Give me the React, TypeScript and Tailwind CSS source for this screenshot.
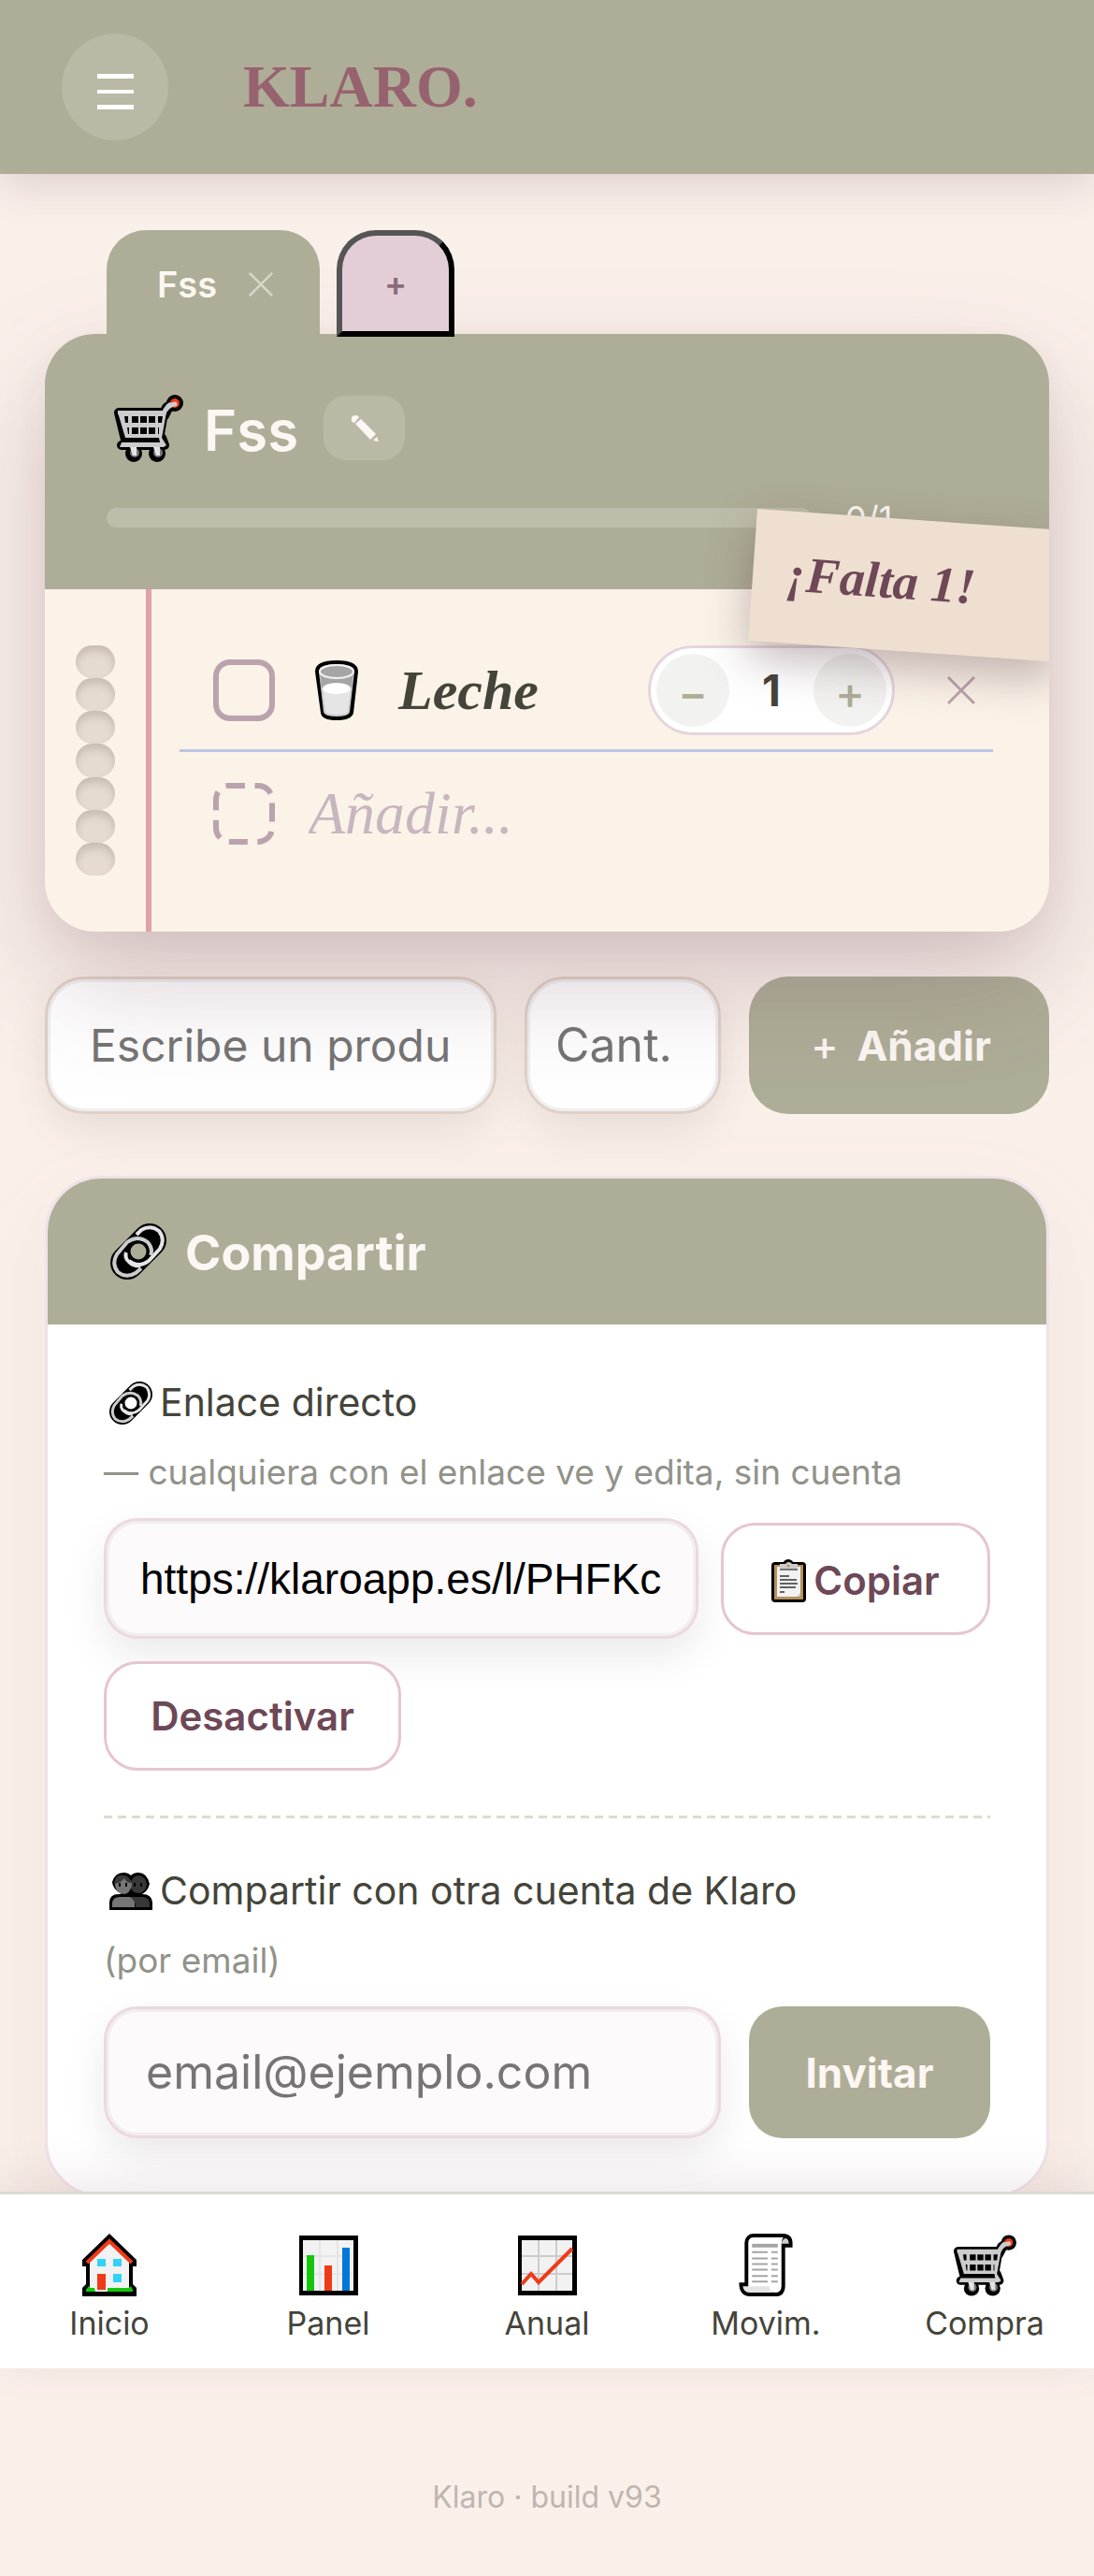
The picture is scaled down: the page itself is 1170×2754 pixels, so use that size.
import React, { useState } from 'react';

type IconProps = { className?: string };

const CartIcon: React.FC<IconProps> = ({ className }) => (
  <svg viewBox="0 0 74 72" className={className} aria-hidden="true">
    <g stroke="#000" strokeLinejoin="round" strokeLinecap="round" fill="#000">
      <path d="M5 19H53L48 48H12Z" strokeWidth="10" />
      <path d="M53 22L57 14L65 9" fill="none" strokeWidth="12" />
      <circle cx="65" cy="9" r="9" stroke="none" />
      <path d="M8 54H54L51 46" strokeWidth="10" />
      <circle cx="21" cy="63" r="9" stroke="none" />
      <circle cx="46" cy="63" r="9" stroke="none" />
    </g>
    <path d="M4 19H53L56 14Q59 9 65 9" fill="none" stroke="#ccc" strokeWidth="4" />
    <circle cx="65" cy="9" r="5" fill="#f03a17" />
    <path d="M53 20Q57 11 65 10" fill="none" stroke="#ccc" strokeWidth="5" strokeLinecap="round" />
    <path d="M4 19H56L51 46H12Z" fill="#ccc" />
    <path d="M11 23H15V30H12ZM19 23H26V30H19ZM28 23H35V30H28ZM37 23H44V30H37ZM47 23H52L51 30H47ZM14 35H16V42H15ZM19 35H26V42H19ZM28 35H35V42H28ZM37 35H44V42H37ZM47 35H48V42H47Z" fill="#000" />
    <path d="M12 46H50V50H12Z" fill="#000" />
    <path d="M48 46H51L56 54L53 56H6L8 51H49Z" fill="#ccc" />
    <circle cx="22" cy="62" r="5" fill="#767676" />
    <circle cx="47" cy="62" r="5" fill="#767676" />
    <path d="M17 56H24V65H20ZM42 56H49V65H45Z" fill="#e5e5e5" />
  </svg>
);

const LinkIcon: React.FC<IconProps & { hole: string }> = ({ className, hole }) => (
  <svg viewBox="0 0 60 60" className={className} aria-hidden="true">
    <path d="M18 42L42 18" stroke="#000" strokeWidth="36" strokeLinecap="round" />
    <path d="M28 12L33 7Q43 1 52 8Q59 17 53 27L41 40Q31 48 20 40" fill="none" stroke="#e5e5e5" strokeWidth="4" />
    <path d="M33 48L27 53Q17 59 8 52Q1 43 7 33L18 20Q29 12 40 20Q46 27 43 34" fill="none" stroke="#ccc" strokeWidth="4" />
    <path d="M17 31Q15 37 20 41Q25 46 32 45" fill="none" stroke="#e5e5e5" strokeWidth="4" />
    <circle cx="30" cy="30" r="10" fill={hole} stroke="#000" strokeWidth="3" />
  </svg>
);

const MilkIcon: React.FC<IconProps> = ({ className }) => (
  <svg viewBox="0 0 46 64" className={className} aria-hidden="true">
    <path d="M0 12Q0 0 23 0T46 12L41 56Q39 64 23 64T6 56Z" fill="#000" />
    <path d="M4 12Q4 4 23 4T42 12L37 55Q36 60 23 60T9 55Z" fill="#ccc" />
    <path d="M5 12L7 30H39L41 12Z" fill="#a5a5a5" />
    <ellipse cx="23" cy="12" rx="18" ry="7" fill="#a5a5a5" stroke="#f2f2f2" strokeWidth="2" />
    <path d="M8 30H38L35 55Q33 58 23 58T11 55Z" fill="#e5e5e5" />
    <ellipse cx="23" cy="30" rx="15" ry="6" fill="#fff" />
  </svg>
);

const ClipboardIcon: React.FC<IconProps> = ({ className }) => (
  <svg viewBox="0 0 37 46" className={className} aria-hidden="true">
    <rect y="3" width="37" height="43" rx="4" fill="#000" />
    <circle cx="18" cy="6" r="6" fill="#000" />
    <rect x="3" y="6" width="31" height="37" fill="#b98f5e" />
    <path d="M6 8H31V37L28 40H6Z" fill="#f2f2f2" />
    <path d="M31 36V40H27Z" fill="#ccc" />
    <path d="M9 10V5H15A4 4 0 0 1 22 5H28V10Z" fill="#ccc" />
    <circle cx="18" cy="7" r="1.5" fill="#b98f5e" />
    <path d="M9 11H28" stroke="#767676" strokeWidth="2" />
    <path d="M9 18H19M9 22H27M9 26H28M9 30H26M9 35H14" stroke="#333" strokeWidth="1.5" />
  </svg>
);

const PeopleIcon: React.FC<IconProps> = ({ className }) => (
  <svg viewBox="0 0 46 40" className={className} aria-hidden="true">
    <path d="M0 40V32Q0 23 10 23H13Q3 17 3 10Q6 0 15 0Q20 0 23 3Q26 0 31 0Q40 0 43 12Q41 20 35 23Q46 23 46 33V40Z" fill="#000" />
    <path d="M22 14Q24 3 31 3Q39 4 40 13Q38 22 31 22Q24 22 22 14Z" fill="#383838" />
    <path d="M6 13Q6 3 14 3Q22 3 24 13Q22 23 15 23Q7 22 6 13Z" fill="#767676" />
    <path d="M5 12Q6 2 14 3Q22 3 23 11Q18 11 16 6Q12 11 5 12Z" fill="#383838" />
    <path d="M3 37V32Q4 26 11 26H27V37Z" fill="#767676" />
    <path d="M22 26H36Q43 27 43 33V37H28Q28 29 22 26Z" fill="#383838" />
    <path d="M11 11V15M18 11V15M27 11V15M34 11V15" stroke="#000" strokeWidth="2" />
  </svg>
);

const HouseIcon: React.FC<IconProps> = ({ className }) => (
  <svg viewBox="0 0 58 67" className={className} aria-hidden="true">
    <path d="M0 28L29 0L58 28V35H54V54L58 58V67H0V58L4 54V35H0Z" fill="#000" />
    <path d="M8 62V30L29 8L50 30V62Z" fill="#f2f2f2" />
    <path d="M5 31L29 8L53 31" fill="none" stroke="#f03a17" strokeWidth="4" />
    <path d="M16 27H25V35H16ZM33 27H42V35H33ZM33 43H42V52H33Z" fill="#31d2f7" />
    <path d="M16 43H25V60H16Z" fill="#f03a17" />
    <path d="M4 62V60L7 56L9 58H13L14 62ZM27 62V58H50L52 56L54 60V62Z" fill="#16c60c" />
  </svg>
);

const BarsIcon: React.FC<IconProps> = ({ className }) => (
  <svg viewBox="0 0 63 64" className={className} aria-hidden="true">
    <rect width="63" height="64" fill="#000" />
    <rect x="4" y="5" width="54" height="54" fill="#f2f2f2" />
    <path d="M4 22H58M4 41H58M22 5V59M41 5V59" stroke="#e5e5e5" strokeWidth="2" />
    <path d="M8 21H16V59H8Z" fill="#16c60c" />
    <path d="M27 32H35V59H27Z" fill="#f03a17" />
    <path d="M46 13H54V59H46Z" fill="#0078d7" />
  </svg>
);

const TrendIcon: React.FC<IconProps> = ({ className }) => (
  <svg viewBox="0 0 63 64" className={className} aria-hidden="true">
    <rect width="63" height="64" fill="#000" />
    <rect x="4" y="5" width="54" height="54" fill="#f2f2f2" />
    <path d="M4 22H58M4 41H58M22 5V59M41 5V59" stroke="#ccc" strokeWidth="2" />
    <path d="M4 52L14 41L22 50L58 14" fill="none" stroke="#f03a17" strokeWidth="4" />
  </svg>
);

const ReceiptIcon: React.FC<IconProps> = ({ className }) => (
  <svg viewBox="0 0 58 68" className={className} aria-hidden="true">
    <path d="M6 53V10Q7 0 16 0H49Q58 1 58 10V15H50V56Q50 68 40 68H12Q0 68 0 53Z" fill="#000" />
    <path d="M10 60V10Q10 4 16 4H48Q46 7 46 11V57Q46 64 39 64Z" fill="#fff" />
    <path d="M46 11Q47 5 51 5Q54 6 54 11Z" fill="#ccc" />
    <path d="M4 57H33Q33 62 37 64H12Q5 64 4 57Z" fill="#e5e5e5" />
    <path d="M14 13H42" stroke="#a5a5a5" strokeWidth="4" />
    <path d="M14 20H31M35 20H42M14 27H31M35 27H42M14 33H31M35 33H42M14 39H31M35 39H42M14 46H31M35 46H42M14 52H31M35 52H42" stroke="#a5a5a5" strokeWidth="2" />
  </svg>
);

const PencilIcon: React.FC<IconProps> = ({ className }) => (
  <svg viewBox="0 0 30 30" className={className} aria-hidden="true" fill="#fcf7f3">
    <path d="M1 7Q0 1 5 1Q8 1 9 3L4 9Q2 9 1 7Z" />
    <path d="M5 10L11 5L27 21L21 27Z" />
    <path d="M28 24L30 29L24 28Z" />
  </svg>
);

const CrossIcon: React.FC<IconProps> = ({ className }) => (
  <svg viewBox="0 0 30 30" className={className} aria-hidden="true">
    <path d="M1 1L29 29M29 1L1 29" stroke="currentColor" strokeWidth="3" />
  </svg>
);

const holes = [1, 2, 3, 4, 5, 6, 7];

const navItems = [
  { id: 'inicio', label: 'Inicio', icon: <HouseIcon className="h-[67px] w-[58px]" /> },
  { id: 'panel', label: 'Panel', icon: <BarsIcon className="h-16 w-[63px]" /> },
  { id: 'anual', label: 'Anual', icon: <TrendIcon className="h-16 w-[63px]" /> },
  { id: 'movim', label: 'Movim.', icon: <ReceiptIcon className="h-[67px] w-[58px]" /> },
  { id: 'compra', label: 'Compra', icon: <CartIcon className="h-[66px] w-[67px]" /> },
];

const App: React.FC = () => {
  const [qty, setQty] = useState(1);

  return (
    <div className="min-h-screen overflow-x-hidden bg-[#faf0ea] pb-[52px] font-['Inter','Liberation_Sans',sans-serif] text-[#44443a]">
      <header className="flex h-[186px] items-center gap-20 bg-[#aead97] pl-[66px] shadow-[0_12px_42px_rgba(68,50,60,0.16)]">
        <button type="button" aria-label="Menú" className="size-[114px] rounded-full bg-white/15">
          <svg viewBox="0 0 114 114" className="size-full" aria-hidden="true">
            <path d="M38 43H77V48H38ZM38 60H77V64H38ZM38 76H77V81H38Z" fill="#fff" />
          </svg>
        </button>
        <a href="#inicio" className="font-['Liberation_Serif',serif] text-[64px] leading-none font-bold text-[#97626f]">
          KLARO.
        </a>
      </header>

      <main className="px-12 pt-[60px]">
        <div className="relative z-20 flex h-[111px] items-start gap-[18px] pl-[66px]">
          <div className="flex h-full w-[228px] items-center justify-between rounded-t-[42px] bg-[#aead97] pt-1 pr-[50px] pl-[54px]">
            <button type="button" className="text-[38px] leading-none font-semibold text-[#fcf7f3]">Fss</button>
            <button type="button" aria-label="Cerrar lista" className="text-[#d8d6ca]">
              <CrossIcon className="size-[26px]" />
            </button>
          </div>
          <button
            type="button"
            aria-label="Nueva lista"
            className="h-[114px] w-[126px] rounded-t-[42px] border-6 border-t-[#555] border-r-black border-b-black border-l-[#555] bg-[#e3ced8] text-[36px] leading-none font-semibold text-[#8b6b78]"
          >
            +
          </button>
        </div>

        <section className="relative z-10 overflow-hidden rounded-[54px] bg-[#fbf3e8] shadow-[0_54px_120px_rgba(110,70,90,0.26),0_12px_36px_rgba(90,70,60,0.06)]">
          <div className="h-[273px] bg-[#aead97] px-[66px] pt-[66px]">
            <div className="flex h-[69px] items-center">
              <CartIcon className="ml-2 h-[72px] w-[74px]" />
              <h1 className="ml-[22px] pt-1 text-[60px] leading-none font-semibold text-[#fcf7f3]">Fss</h1>
              <button type="button" aria-label="Editar nombre" className="ml-[27px] flex h-full w-[87px] items-center justify-center rounded-3xl bg-white/15">
                <PencilIcon className="size-[30px]" />
              </button>
            </div>
            <div className="mt-[51px] flex h-[21px] items-center gap-9">
              <div className="h-full flex-1 rounded-full bg-white/20" />
              <span className="w-[152px] text-[36px] leading-none text-[#fcf7f3]">0/1</span>
            </div>
          </div>

          <div className="flex h-[366px]">
            <div className="flex w-[114px] shrink-0 justify-center border-r-6 border-[#e2a0aa] py-[60px]">
              <div className="flex w-[42px] flex-col">
                {holes.map((hole) => (
                  <span key={hole} className="flex-1 rounded-full bg-[#e5dbd1] shadow-[inset_0_6px_9px_rgba(90,70,60,0.2)]" />
                ))}
              </div>
            </div>
            <ul className="min-w-0 flex-1 pt-[42px] pr-[60px] pl-[30px]">
              <li className="flex h-[132px] items-center border-b-3 border-[#bcc5e6] pt-[3px] pr-[19px] pl-9">
                <input
                  type="checkbox"
                  id="item-leche"
                  className="size-[66px] shrink-0 appearance-none rounded-[18px] border-6 border-[#bba3ae]"
                />
                <MilkIcon className="ml-[43px] h-16 w-[46px]" />
                <label
                  htmlFor="item-leche"
                  className="ml-[43px] flex-1 font-['Liberation_Serif',serif] text-[60px] leading-none font-bold italic"
                >
                  Leche
                </label>
                <div className="flex h-24 w-[264px] items-center justify-between rounded-full border-3 border-[#e6d5de] bg-white px-1.5">
                  <button
                    type="button"
                    aria-label="Menos"
                    onClick={() => setQty(Math.max(1, qty - 1))}
                    className="size-[78px] rounded-full bg-[#f2f2f0] pt-1.5 text-[48px] leading-none font-medium text-[#aead97]"
                  >
                    −
                  </button>
                  <span className="text-[46px] leading-none font-bold">{qty}</span>
                  <button
                    type="button"
                    aria-label="Más"
                    onClick={() => setQty(qty + 1)}
                    className="size-[78px] rounded-full bg-[#f2f2f0] pt-1.5 text-[48px] leading-none font-medium text-[#aead97]"
                  >
                    +
                  </button>
                </div>
                <button type="button" aria-label="Quitar Leche" className="ml-14 text-[#bba3ae]">
                  <CrossIcon className="size-[30px]" />
                </button>
              </li>
              <li className="flex h-[132px] items-center pl-9">
                <svg viewBox="0 0 66 66" className="size-[66px] shrink-0" aria-hidden="true">
                  <path
                    d="M14 3H48A15 15 0 0 1 63 18V48A15 15 0 0 1 48 63H18A15 15 0 0 1 3 48V18A15 15 0 0 1 14 3"
                    fill="none"
                    stroke="#bba3ae"
                    strokeWidth="6"
                    strokeDasharray="20 10.5"
                  />
                </svg>
                <input
                  type="text"
                  aria-label="Añadir producto a la lista"
                  placeholder="Añadir..."
                  className="ml-9 min-w-0 flex-1 bg-transparent font-['Liberation_Serif',serif] text-[64px] leading-[72px] italic outline-none placeholder:text-[#c7b6bf]"
                />
              </li>
            </ul>
          </div>

          {/* sticky note over the top-right corner */}
          <div className="absolute top-[187px] -right-[18px] flex h-[141px] w-[330px] origin-top-left rotate-4 items-center bg-[#eedfd0] pb-2 pl-9 shadow-[0_18px_48px_rgba(80,50,60,0.34)]">
            <span className="font-['Liberation_Serif',serif] text-[54px] leading-none font-bold text-[#6e4857] italic">¡Falta 1!</span>
          </div>
        </section>

        <form className="mt-12 flex h-[147px] gap-[30px]" onSubmit={(e) => e.preventDefault()}>
          <input
            type="text"
            aria-label="Producto"
            placeholder="Escribe un producto"
            className="min-w-0 flex-1 rounded-[42px] border-3 border-[#dfd1c7] bg-white px-[45px] text-[48px] shadow-[inset_0_0_0_3px_rgba(68,50,60,0.08),0_18px_42px_rgba(90,60,50,0.1)] outline-none placeholder:text-[#757575]"
          />
          <input
            type="text"
            aria-label="Cantidad"
            placeholder="Cant."
            className="w-[210px] rounded-[42px] border-3 border-[#dfd1c7] bg-white px-[30px] text-[50px] shadow-[inset_0_0_0_3px_rgba(68,50,60,0.08),0_18px_42px_rgba(90,60,50,0.1)] outline-none placeholder:text-[#757575]"
          />
          <button type="submit" className="w-[321px] rounded-[42px] bg-[#aead97] pl-1 text-[44px] font-bold text-[#fcf7f3]">
            <span className="mr-5 font-medium">+</span>Añadir
          </button>
        </form>

        <section className="mt-[66px] overflow-hidden rounded-[60px] border-3 border-[#efe2e9] bg-white shadow-[0_30px_90px_rgba(160,120,90,0.08)]">
          <div className="flex h-[156px] items-center bg-[#aead97] px-[67px]">
            <LinkIcon className="size-[60px]" hole="#aead97" />
            <h2 className="ml-5 pt-1 text-[52px] leading-none font-bold text-[#fcf7f3]">Compartir</h2>
          </div>

          <div className="px-[60px] pt-[48px] pb-[60px]">
            <label htmlFor="enlace" className="flex h-[72px] items-center gap-2 pl-1.5 text-[41px]">
              <LinkIcon className="size-[46px]" hole="#fff" />
              Enlace directo
            </label>
            <p className="h-[87px] text-[37px] leading-[75px] text-[#919289]">— cualquiera con el enlace ve y edita, sin cuenta</p>
            <div className="flex flex-wrap items-center gap-6">
              <input
                id="enlace"
                type="text"
                readOnly
                value="https://klaroapp.es/l/PHFKcQ7"
                className="h-[129px] min-w-0 flex-1 basis-3/5 rounded-[36px] border-3 border-[#ecd8e0] bg-[#fcfafb] px-9 font-['Liberation_Sans',sans-serif] text-[46px] text-black shadow-[inset_0_0_0_3px_rgba(68,50,60,0.06),0_18px_42px_rgba(60,50,60,0.1)] outline-none"
              />
              <button type="button" className="flex h-[120px] w-[288px] items-center justify-center gap-2 rounded-[36px] border-3 border-[#e6c5d1] pt-1 text-[42px] font-semibold text-[#6e4857]">
                <ClipboardIcon className="h-[46px] w-[37px]" />
                Copiar
              </button>
              <button type="button" className="h-[117px] w-[318px] rounded-[36px] border-3 border-[#e6c5d1] bg-white text-[42px] font-semibold text-[#6e4857]">
                Desactivar
              </button>
            </div>

            <div className="mt-12 h-[3px] bg-[repeating-linear-gradient(90deg,#dbdbd4_0_9px,transparent_9px_15px)]" />

            <div className="pt-[42px]">
              <label htmlFor="email" className="flex h-[72px] items-center gap-2 pl-1.5 text-[41px]">
                <PeopleIcon className="h-10 w-[46px]" />
                Compartir con otra cuenta de Klaro
              </label>
              <p className="h-[87px] text-[37px] leading-[75px] text-[#919289]">(por email)</p>
              <form className="flex h-[141px] gap-[30px]" onSubmit={(e) => e.preventDefault()}>
                <input
                  id="email"
                  type="email"
                  placeholder="email@ejemplo.com"
                  className="min-w-0 flex-1 rounded-[36px] border-3 border-[#ecd8e0] bg-[#fcfafb] px-[42px] text-[50px] shadow-[inset_0_0_0_3px_rgba(68,50,60,0.06),0_18px_42px_rgba(60,50,60,0.1)] outline-none placeholder:text-[#757575]"
                />
                <button type="submit" className="w-[258px] rounded-[36px] bg-[#aead97] text-[44px] font-bold text-[#fcf7f3]">
                  Invitar
                </button>
              </form>
            </div>
          </div>
        </section>
      </main>

      <nav className="relative z-30 -mt-1.5 grid h-[189px] grid-cols-5 border-t-3 border-[#dbdbd4] bg-white pt-[42px] shadow-[0_-9px_48px_rgba(110,60,80,0.12)]">
        {navItems.map((item) => (
          <a key={item.id} href={`#${item.id}`} className="flex flex-col items-center text-[34px] leading-[42px]">
            <span className="flex h-[67px] items-center">{item.icon}</span>
            <span className="mt-2">{item.label}</span>
          </a>
        ))}
      </nav>

      <footer className="mt-[114px] text-center text-[32px] leading-[48px] text-[#beb6b0]">Klaro · build v93</footer>
    </div>
  );
};

export default App;
